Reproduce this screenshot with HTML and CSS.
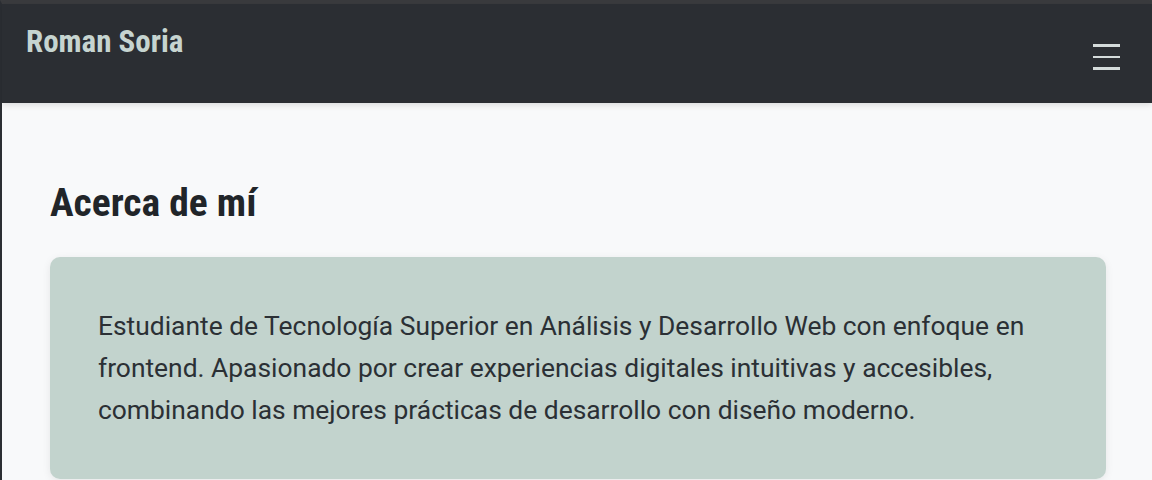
FILE: index.html
```html
<!DOCTYPE html>
<html lang="es">
<head>
<meta charset="utf-8">
<title>Roman Soria</title>
<link rel="stylesheet" href="styles.css">
</head>
<body>
<div class="frame">
  <header class="navbar">
    <a class="brand" href="#">Roman Soria</a>
    <button class="toggler" aria-label="Menú">
      <span></span><span></span><span></span>
    </button>
  </header>
  <main class="content">
    <section class="about">
      <h2 class="section-title">Acerca de mí</h2>
      <div class="card">
        <p>Estudiante de Tecnología Superior en Análisis y Desarrollo Web con enfoque en frontend. Apasionado por crear experiencias digitales intuitivas y accesibles, combinando las mejores prácticas de desarrollo con diseño moderno.</p>
      </div>
    </section>
  </main>
</div>
</body>
</html>
```

FILE: styles.css
```css
* { box-sizing: border-box; }
html, body { margin: 0; padding: 0; height: 100%; }
body {
  font-family: Roboto, "Noto Sans", sans-serif;
  background: #2b2e33;
  overflow: hidden;
}
.frame {
  border-top: 4px solid #3a3b3e;
  border-left: 2px solid #2b2e33;
  min-height: 100%;
  background: #f8f9fa;
}
.navbar {
  height: 99px;
  background: #2b2e33;
  display: flex;
  justify-content: space-between;
  align-items: flex-start;
  padding: 0 32px 0 24px;
  box-shadow: 0 2px 6px rgba(0,0,0,0.12);
  position: relative;
}
.brand {
  font-weight: 700;
  font-size: 31px;
  font-stretch: condensed;
  color: #c6d4d0;
  text-decoration: none;
  margin-top: 20px;
  line-height: 36px;
}
.toggler {
  background: none;
  border: 0;
  padding: 0;
  margin-top: 40px;
  width: 27px;
  display: flex;
  flex-direction: column;
  gap: 9px;
}
.toggler span {
  display: block;
  height: 2.5px;
  background: #d4dbdb;
}
.content {
  padding: 78px 46px 0 48px;
}
.section-title {
  margin: 0 0 32px;
  font-size: 39.5px;
  font-weight: 700;
  font-stretch: condensed;
  color: #212529;
  line-height: 44px;
}
.card {
  background: #c2d3cd;
  border-radius: 10px;
  padding: 48px;
  box-shadow: 0 2px 8px rgba(0,0,0,0.08);
}
.card p {
  margin: 0;
  font-size: 26.4px;
  line-height: 42px;
  color: #2b3035;
}
```
